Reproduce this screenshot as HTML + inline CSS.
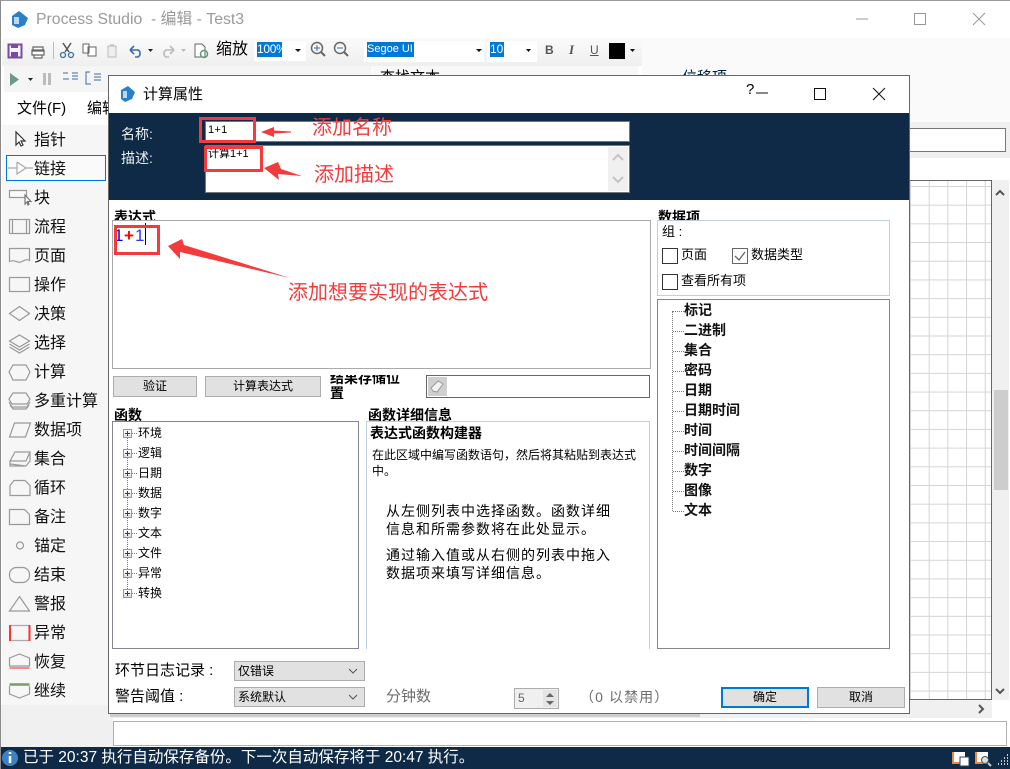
<!DOCTYPE html>
<html><head><meta charset="utf-8"><style>
html,body{margin:0;padding:0;width:1010px;height:769px;overflow:hidden;background:#fff}
body{position:relative;font-family:"Liberation Sans","Noto Sans CJK SC",sans-serif;font-size:13px;color:#000}
div{position:absolute;box-sizing:border-box}
.t{white-space:nowrap;line-height:20px;height:20px}
.l{font-size:16px;left:34px;color:#111}
.b{font-weight:bold}
.btn{background:#e1e1e1;border:1px solid #adadad;text-align:center;line-height:19px;font-size:12px}
.sel{background:#e1e1e1;border:1px solid #adadad;line-height:18px;padding-left:3px;font-size:12px}
.cb{width:16px;height:16px;border:1px solid #333;background:#fff}
.tr{font-size:12px;left:138px}
.bx{width:9px;height:9px;left:123px;border:1px solid #8a9bb0;background:linear-gradient(#fff,#d8dde5)}
.bx:before{content:"";position:absolute;left:1px;top:3px;width:5px;height:1px;background:#246}
.bx:after{content:"";position:absolute;left:3px;top:1px;width:1px;height:5px;background:#246}
.dh{border-top:1px dotted #777;height:1px;width:5px;left:132px}
.di{font-size:14px;font-weight:bold;left:684px;color:#111}
.dd{border-top:1px dotted #777;height:1px;width:11px;left:673px}
.dt{left:386px;font-size:14px;letter-spacing:1px}
svg{position:absolute;left:0;top:0}
</style></head><body>
<!-- main window -->
<div style="left:0;top:0;width:1010px;height:769px;border-left:1px solid #8a8a8a;border-top:1px solid #999"></div>
<svg width="30" height="30" style="left:8px;top:8px"><path d="M4 8 L11 3 L20 10 L17 17 L10 20 L4 17 Z" fill="#2a7fc9"/><path d="M6 9h5v7H6z" fill="#bcd8f0"/></svg>
<div class="t" style="left:36px;top:10px;font-size:15.800px;color:#9a9a9a">Process Studio&nbsp; - 编辑 - Test3</div>
<svg width="1010" height="40"><path d="M856 19h12" stroke="#999"/><rect x="914.500" y="13.500" width="11" height="11" fill="none" stroke="#999"/><path d="M973 13l12 12M985 13l-12 12" stroke="#999"/></svg>
<!-- toolbar 1 -->
<div style="left:2px;top:38px;width:350px;height:28px;background:linear-gradient(#fafafa,#efefef)"></div>
<div style="left:352px;top:38px;width:290px;height:28px;background:linear-gradient(#fafafa,#efefef)"></div>
<div style="left:642px;top:38px;width:368px;height:84px;background:#fafafa"></div>
<svg width="700" height="70">
<rect x="8.500" y="44.500" width="13" height="13" fill="none" stroke="#7a4aa8" stroke-width="2"/><rect x="11" y="44" width="7" height="4" fill="#7a4aa8"/><rect x="11" y="52" width="7" height="5" fill="#7a4aa8"/>
<path d="M33 47h10v4h-10zM32 50h12v5h-12zM34 55h8v3h-8z" fill="#fff" stroke="#666" stroke-width="1.200"/>
<path d="M53.500 42v17" stroke="#bbb"/>
<path d="M63 43l6 9M71 43l-6 9" stroke="#555" stroke-width="1.500"/><circle cx="63" cy="55" r="2.500" fill="none" stroke="#3a6ea5" stroke-width="1.300"/><circle cx="71" cy="55" r="2.500" fill="none" stroke="#3a6ea5" stroke-width="1.300"/>
<path d="M83 44h6v9h-6zM88 47h8v9h-8z" fill="#fff" stroke="#666"/>
<path d="M108 46h8v11h-8z" fill="#eee" stroke="#bbb"/><path d="M110 44h4v3h-4z" fill="#ccc"/>
<path d="M130 50h8a4 4 0 0 1 0 7h-3M130 50l4-4M130 50l4 4" fill="none" stroke="#3a6ea5" stroke-width="1.600"/>
<path d="M148 49l5 0-2.500 3z" fill="#222"/>
<path d="M174 50h-8a4 4 0 0 0 0 7h3M174 50l-4-4M174 50l-4 4" fill="none" stroke="#bbb" stroke-width="1.600"/>
<path d="M181 49l5 0-2.500 3z" fill="#bbb"/>
<path d="M195 44h7l3 3v10h-10z" fill="#fff" stroke="#666"/><circle cx="204" cy="54" r="3.500" fill="none" stroke="#5a9a7a" stroke-width="1.500"/>
<circle cx="317" cy="48" r="5.500" fill="none" stroke="#666" stroke-width="1.500"/><path d="M321 52l4 4" stroke="#666" stroke-width="2"/><path d="M314 48h6M317 45v6" stroke="#3a6ea5"/>
<circle cx="340" cy="48" r="5.500" fill="none" stroke="#666" stroke-width="1.500"/><path d="M344 52l4 4" stroke="#666" stroke-width="2"/><path d="M337 48h6" stroke="#3a6ea5"/>
</svg>
<div class="t" style="left:216px;top:40px;font-size:16px">缩放</div>
<div style="left:254px;top:41px;width:52px;height:20px;background:#fff"></div>
<div class="t" style="left:257px;top:42px;height:15px;line-height:15px;font-size:12px;background:#0078d7;color:#fff;width:25px;overflow:hidden;letter-spacing:-.3px">100%</div>
<div style="left:364px;top:41px;width:120px;height:21px;background:#fff"></div>
<div class="t" style="left:367px;top:42px;height:15px;line-height:15px;font-size:11px;background:#0078d7;color:#fff;width:47px;overflow:hidden">Segoe UI</div>
<div style="left:487px;top:41px;width:50px;height:21px;background:#fff"></div>
<div class="t" style="left:490px;top:42px;height:15px;line-height:15px;font-size:12px;background:#0078d7;color:#fff;width:14px">10</div>
<svg width="700" height="70" style="z-index:1"><path d="M295 49h6l-3 3zM476 49h6l-3 3zM526 49h5l-2.500 3zM630 49h5l-2.500 3z" fill="#111"/></svg>
<div class="t b" style="left:545px;top:40px;font-size:12px;color:#555">B</div>
<div class="t" style="left:569px;top:40px;font-size:13px;font-style:italic;font-family:'Liberation Serif',serif;font-weight:bold;color:#555">I</div>
<div class="t" style="left:590px;top:40px;font-size:12px;color:#555;text-decoration:underline">U</div>
<div style="left:609px;top:43px;width:16px;height:16px;background:#000"></div>
<!-- toolbar 2 -->
<div style="left:4px;top:66px;width:368px;height:26px;background:#f5f5f5"></div>
<div style="left:373px;top:66px;width:265px;height:26px;background:#f8f8f8"></div>
<svg width="460" height="92"><path d="M10 73l9 6.500-9 6.500z" fill="#6a9a8a"/><path d="M28 78h5l-2.500 3z" fill="#222"/><path d="M43 73h3v12h-3zM48 73h3v12h-3z" fill="#bbb"/><path d="M63 73h5M72 73h6M72 76h6M72 79h6M63 79h6" stroke="#3a6ea5"/><path d="M90 72h-4v12h5M94 74h7M94 77h7M94 80h7" stroke="#3a6ea5" fill="none"/></svg>
<div class="t" style="left:380px;top:68px;font-size:15px;height:8px;overflow:hidden">查找文本</div>
<div class="t" style="left:682px;top:68px;font-size:15px;height:8px;overflow:hidden;color:#024">位移项</div>
<!-- menu -->
<div style="left:2px;top:92px;width:108px;height:33px;background:#fff"></div>
<div class="t" style="left:17px;top:99px;font-size:15px">文件(F)</div>
<div class="t" style="left:87px;top:99px;font-size:15px;width:21px;overflow:hidden">编辑</div>
<!-- left panel -->
<div style="left:2px;top:125px;width:106px;height:580px;background:#f6f6f6"></div>
<div style="left:1px;top:705px;width:112px;height:42px;background:#f0f0f0"></div>
<div style="left:6px;top:155px;width:100px;height:26px;border:1px solid #0078d7;background:#fafafa"></div>
<svg width="110" height="720" fill="none" stroke="#999" stroke-width="1.200">
<path d="M16 132v13l3-3 2 4 2-1-2-4h4z" fill="#fff" stroke="#333"/>
<path d="M8 168h9M17 162v12l9-6-9-6M26 168h7" stroke="#aaa"/>
<path d="M9.500 190.500h17v7h-17z" fill="#fafafa"/><path d="M25 195v9l2-2 1 3 1-.5-1-3h3z" fill="#fff" stroke="#777"/>
<rect x="9.500" y="219.500" width="20" height="14"/><path d="M12.500 219.500v14M26.500 219.500v14"/>
<path d="M9.500 248.500h20v12c-5-3-8 4-13 1-3-1-5-1-7 0z"/>
<rect x="9.500" y="277.500" width="20" height="14"/>
<path d="M9.500 313.500l10-7 10 7-10 7z"/>
<path d="M9.500 341l10-6 10 6-10 6zM9.500 344l10 6 10-6M9.500 347l10 6 10-6"/>
<path d="M13 365h13l4 7-4 8h-13l-4-8z"/>
<path d="M13 393h13l4 6-3 5h-15l-3-5zM9 402l3 5h15l3-5M10 405l3 4h13l3-4"/>
<path d="M14.500 423h16l-5 14h-16z"/>
<path d="M15 452h15l-4 9h-16zM10 461v3l16 2 4-5v-9M10 464v2h16"/>
<path d="M14 480.500h11l5 5v10h-20v-10z"/>
<path d="M9.500 509.500h15l5 5v10h-20z"/>
<circle cx="20" cy="545.500" r="3.500"/>
<rect x="9.500" y="567.500" width="20" height="15" rx="7"/>
<path d="M19.500 596.500l10 14.500h-20z"/>
<path d="M10 625.500h19v15h-19" stroke="#aaa"/><path d="M10 625v16M29.500 625v16" stroke="#f33" stroke-width="2"/>
<path d="M19.500 654l10 4v8h-20v-8z"/><path d="M9.500 668h20" stroke="#f66" stroke-width="1.500"/>
<path d="M9.500 686v8l10 4 10-4v-8"/><path d="M9.500 684.500h20" stroke="#7a9a6a" stroke-width="2.500"/>
</svg>
<div class="t l" style="top:131px">指针</div><div class="t l" style="top:160px">链接</div><div class="t l" style="top:189px">块</div><div class="t l" style="top:218px">流程</div><div class="t l" style="top:247px">页面</div><div class="t l" style="top:276px">操作</div><div class="t l" style="top:305px">决策</div><div class="t l" style="top:334px">选择</div><div class="t l" style="top:363px">计算</div><div class="t l" style="top:392px">多重计算</div><div class="t l" style="top:421px">数据项</div><div class="t l" style="top:450px">集合</div><div class="t l" style="top:479px">循环</div><div class="t l" style="top:508px">备注</div><div class="t l" style="top:537px">锚定</div><div class="t l" style="top:566px">结束</div><div class="t l" style="top:595px">警报</div><div class="t l" style="top:624px">异常</div><div class="t l" style="top:653px">恢复</div><div class="t l" style="top:682px">继续</div>
<!-- right side: bar + grid -->
<div style="left:910px;top:122px;width:100px;height:36px;background:#f0f0f0"></div>
<div style="left:905px;top:128px;width:101px;height:24px;border:1px solid #777;background:#fff"></div>
<div style="left:905px;top:180px;width:87px;height:520px;border:1px solid #666;background-color:#fff;background-image:linear-gradient(#d4d4d4 1px,transparent 1px),linear-gradient(90deg,#d4d4d4 1px,transparent 1px);background-size:18.700px 18.700px;background-position:4px 5px"></div>
<div style="left:992px;top:180px;width:17px;height:520px;background:#f0f0f0"></div>
<div style="left:994px;top:390px;width:14px;height:100px;background:#cdcdcd"></div>
<div style="left:113px;top:700px;width:879px;height:18px;background:#f0f0f0"></div>
<div style="left:110px;top:713px;width:590px;height:4px;background:#cdcdcd"></div>
<svg width="1010" height="769"><path d="M996 195l4-4 4 4M996 689l4 4 4-4M979 705l4 4-4 4" fill="none" stroke="#555" stroke-width="2"/></svg>
<div style="left:113px;top:721px;width:894px;height:25px;border:1px solid #b0b0b0;background:#fff"></div>
<!-- status bar -->
<div style="left:1px;top:747px;width:1009px;height:22px;background:#0f2a47"></div>
<svg width="1010" height="769"><circle cx="10" cy="758" r="8" fill="#3f82c4"/><path d="M10 752v2M10 756v7" stroke="#fff" stroke-width="2.500"/>
<path d="M952 752h12v12h-12z" fill="#e8893c"/><rect x="954" y="752" width="11" height="10" fill="#fff"/><rect x="960" y="757" width="9" height="9" fill="#fff" stroke="#345"/>
<path d="M975 752h12v12h-12z" fill="#e8893c"/><rect x="977" y="752" width="11" height="10" fill="#fff"/><circle cx="985" cy="760" r="3.500" fill="#ddd" stroke="#456"/><path d="M988 763l3 3" stroke="#ccc" stroke-width="2"/>
<path d="M1007 755h1M1004 758h1M1007 758h1M1001 761h1M1004 761h1M1007 761h1M998 764h1M1001 764h1M1004 764h1M1007 764h1" stroke="#ccc" stroke-width="2"/></svg>
<div class="t" style="left:23px;top:748px;font-size:15.500px;color:#fff">已于 20:37 执行自动保存备份。下一次自动保存将于 20:47 执行。</div>
<!-- dialog -->
<div style="left:108px;top:75px;width:802px;height:639px;background:#fff;border:1px solid #666"></div>
<div style="left:109px;top:113px;width:800px;height:87px;background:#0f2a47"></div>
<svg width="140" height="110" style="left:0;top:0"><path d="M121 90l7-4 7 6-3 7-7 3-4-3z" fill="#2a7fc9"/><path d="M123 91h4v7h-4z" fill="#bcd8f0"/></svg>
<div class="t" style="left:143px;top:85px;font-size:15px">计算属性</div>
<div class="t" style="left:746px;top:80px;font-size:15px">?</div>
<svg width="1010" height="110"><path d="M756 93h12" stroke="#111"/><rect x="814.500" y="88.500" width="11" height="11" fill="none" stroke="#111"/><path d="M873 88l12 12M885 88l-12 12" stroke="#111"/></svg>
<div class="t" style="left:121px;top:124px;font-size:14px;color:#eee">名称:</div>
<div class="t" style="left:121px;top:148px;font-size:14px;color:#eee">描述:</div>
<div style="left:205px;top:121px;width:425px;height:21px;background:#fff;border:1px solid #777"></div>
<div class="t" style="left:208px;top:120px;font-size:11px;letter-spacing:.3px">1+1</div>
<div style="left:205px;top:145px;width:425px;height:48px;background:#fff;border:1px solid #777"></div>
<div style="left:608px;top:147px;width:20px;height:44px;background:#f0f0f0"></div>
<svg width="1010" height="200"><path d="M613 160l5-5 5 5M613 177l5 5 5-5" fill="none" stroke="#c4c4c4" stroke-width="2"/></svg>
<div class="t" style="left:208px;top:144px;font-size:11px">计算1+1</div>
<!-- expression -->
<div class="t b" style="left:114px;top:207px;font-size:14px;height:13px;overflow:hidden">表达式</div>
<div style="left:112px;top:220px;width:539px;height:149px;border:1px solid #aaa;background:#fff"></div>
<div class="t" style="left:114px;top:226px;font-size:17px;color:#00f">1</div>
<div class="t b" style="left:124px;top:226px;font-size:17px;color:#f00">+</div>
<div class="t" style="left:135px;top:226px;font-size:17px;color:#33f">1</div>
<div style="left:145px;top:223px;width:1px;height:22px;background:#000"></div>
<div class="btn" style="left:113px;top:376px;width:84px;height:21px">验证</div>
<div class="btn" style="left:205px;top:376px;width:116px;height:21px">计算表达式</div>
<div class="b" style="left:330px;top:375px;width:76px;height:24px;overflow:hidden;font-size:14px;line-height:15px"><div style="position:static;margin-top:-4px">结果存储位置</div></div>
<div style="left:426px;top:375px;width:224px;height:23px;border:1px solid #666;background:#fff"></div>
<div style="left:428px;top:377px;width:19px;height:19px;background:#cfcfcf"></div>
<svg width="460" height="400"><path d="M431 388l7-7 5 3-6 8-4-1z" fill="#f3f3f3" stroke="#999"/></svg>
<!-- functions -->
<div class="t b" style="left:114px;top:405px;font-size:14px">函数</div>
<div style="left:112px;top:421px;width:247px;height:228px;border:1px solid #858590;background:#fff"></div>
<div style="left:127px;top:433px;height:160px;width:1px;border-left:1px dotted #777"></div>
<div class="bx" style="top:429px"></div><div class="dh" style="top:433px"></div><div class="t tr" style="top:423px">环境</div>
<div class="bx" style="top:449px"></div><div class="dh" style="top:453px"></div><div class="t tr" style="top:443px">逻辑</div>
<div class="bx" style="top:469px"></div><div class="dh" style="top:473px"></div><div class="t tr" style="top:463px">日期</div>
<div class="bx" style="top:489px"></div><div class="dh" style="top:493px"></div><div class="t tr" style="top:483px">数据</div>
<div class="bx" style="top:509px"></div><div class="dh" style="top:513px"></div><div class="t tr" style="top:503px">数字</div>
<div class="bx" style="top:529px"></div><div class="dh" style="top:533px"></div><div class="t tr" style="top:523px">文本</div>
<div class="bx" style="top:549px"></div><div class="dh" style="top:553px"></div><div class="t tr" style="top:543px">文件</div>
<div class="bx" style="top:569px"></div><div class="dh" style="top:573px"></div><div class="t tr" style="top:563px">异常</div>
<div class="bx" style="top:589px"></div><div class="dh" style="top:593px"></div><div class="t tr" style="top:583px">转换</div>
<!-- details -->
<div class="t b" style="left:368px;top:405px;font-size:14px">函数详细信息</div>
<div style="left:366px;top:421px;width:284px;height:228px;border:1px solid #c0d0e0;border-bottom:0;background:#fff"></div>
<div class="t b" style="left:370px;top:423px;font-size:14px">表达式函数构建器</div>
<div class="t" style="left:372px;top:445px;font-size:12px">在此区域中编写函数语句，然后将其粘贴到表达式</div>
<div class="t" style="left:372px;top:461px;font-size:12px">中。</div>
<div class="t dt" style="top:501px">从左侧列表中选择函数。函数详细</div>
<div class="t dt" style="top:519px">信息和所需参数将在此处显示。</div>
<div class="t dt" style="top:545px">通过输入值或从右侧的列表中拖入</div>
<div class="t dt" style="top:563px">数据项来填写详细信息。</div>
<!-- data items -->
<div class="t b" style="left:658px;top:207px;font-size:14px;height:13px;overflow:hidden">数据项</div>
<div style="left:657px;top:220px;width:233px;height:76px;border:1px solid #c0cfe0;background:#fff"></div>
<div class="t" style="left:662px;top:222px">组 :</div>
<div class="cb" style="left:662px;top:248px"></div><div class="t" style="left:681px;top:245px">页面</div>
<div class="cb" style="left:732px;top:248px;border-color:#666"></div><div class="t" style="left:751px;top:245px">数据类型</div>
<svg width="760" height="270"><path d="M735 256l4 4 6-8" fill="none" stroke="#666" stroke-width="1.300"/></svg>
<div class="cb" style="left:662px;top:274px"></div><div class="t" style="left:681px;top:271px">查看所有项</div>
<div style="left:657px;top:299px;width:233px;height:350px;border:1px solid #858590;background:#fff"></div>
<div style="left:672px;top:311px;height:200px;width:1px;border-left:1px dotted #777"></div>
<div class="dd" style="top:311px"></div><div class="t di" style="top:300px">标记</div>
<div class="dd" style="top:331px"></div><div class="t di" style="top:320px">二进制</div>
<div class="dd" style="top:351px"></div><div class="t di" style="top:340px">集合</div>
<div class="dd" style="top:371px"></div><div class="t di" style="top:360px">密码</div>
<div class="dd" style="top:391px"></div><div class="t di" style="top:380px">日期</div>
<div class="dd" style="top:411px"></div><div class="t di" style="top:400px">日期时间</div>
<div class="dd" style="top:431px"></div><div class="t di" style="top:420px">时间</div>
<div class="dd" style="top:451px"></div><div class="t di" style="top:440px">时间间隔</div>
<div class="dd" style="top:471px"></div><div class="t di" style="top:460px">数字</div>
<div class="dd" style="top:491px"></div><div class="t di" style="top:480px">图像</div>
<div class="dd" style="top:511px"></div><div class="t di" style="top:500px">文本</div>
<!-- bottom -->
<div class="t" style="left:115px;top:661px;font-size:15px">环节日志记录 :</div>
<div class="sel" style="left:234px;top:661px;width:131px;height:20px">仅错误</div>
<div class="t" style="left:115px;top:687px;font-size:15px">警告阈值 :</div>
<div class="sel" style="left:234px;top:687px;width:131px;height:20px">系统默认</div>
<div class="t" style="left:386px;top:687px;font-size:15px;color:#6d6d6d">分钟数</div>
<div style="left:514px;top:688px;width:45px;height:21px;border:1px solid #adadad;background:#f0f0f0;font-size:12px;line-height:18px;padding-left:3px;color:#666">5</div>
<div style="left:543px;top:690px;width:14px;height:17px;background:#e4e4e4"></div>
<svg width="600" height="720"><path d="M546 697l4-4 4 4zM546 701l4 4 4-4z" fill="#666"/><path d="M349 669l4 4 4-4M349 695l4 4 4-4" fill="none" stroke="#555"/></svg>
<div class="t" style="left:580px;top:687px;font-size:14px;color:#6d6d6d;letter-spacing:1.100px">（0 以禁用）</div>
<div class="btn" style="left:721px;top:687px;width:88px;height:21px;border:2px solid #0078d7;line-height:17px">确定</div>
<div class="btn" style="left:817px;top:687px;width:88px;height:21px">取消</div>
<!-- annotations -->
<svg width="1010" height="320" style="z-index:5">
<g fill="none" stroke="#f33b3b" stroke-width="3"><rect x="200.500" y="118.500" width="54" height="23"/><rect x="205.500" y="147.500" width="56" height="23"/><rect x="115.500" y="226.500" width="43" height="27"/></g>
<g fill="#f33b3b"><path d="M261 132l13-5 0 3.500 17 1 0 1-17 1 0 3.500z"/><path d="M264 168l14-6 3 7 21 7-24-2 1 6z"/><path d="M168 246l14-7 2 6 106 33-110-26 0 7z"/></g>
</svg>
<div class="t" style="left:312px;top:118px;font-size:20px;color:#f33b3b;z-index:6">添加名称</div>
<div class="t" style="left:314px;top:165px;font-size:20px;color:#f33b3b;z-index:6">添加描述</div>
<div class="t" style="left:288px;top:283px;font-size:20px;color:#f33b3b;z-index:6">添加想要实现的表达式</div>
</body></html>
